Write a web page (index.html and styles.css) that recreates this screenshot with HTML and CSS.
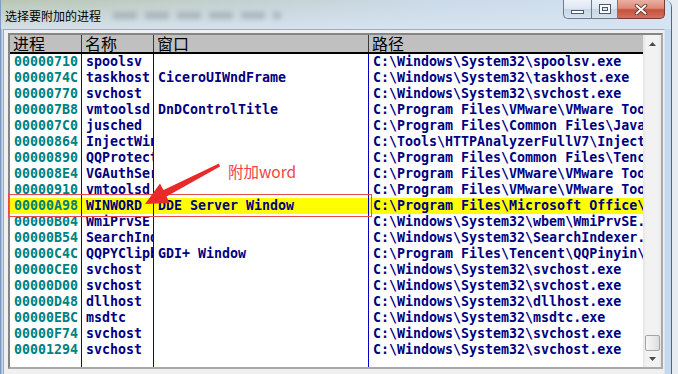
FILE: index.html
```html
<!DOCTYPE html>
<html>
<head>
<meta charset="utf-8">
<link rel="stylesheet" href="styles.css">
</head>
<body>
<div class="window">
  <div class="titlebar">
    <div class="title">选择要附加的进程</div>
    <div class="ghost"></div>
    <div class="caption">
      <div class="cbtn min"><svg width="13" height="4" viewBox="0 0 13 4"><rect x="0.5" y="0.5" width="12" height="3" fill="#fff" stroke="#4a5a6e"/></svg></div>
      <div class="cbtn max"><svg width="12" height="10" viewBox="0 0 12 10"><rect x="0.5" y="0.5" width="11" height="9" fill="#fff" stroke="#4a5a6e"/><rect x="3.5" y="3.5" width="5" height="3" fill="#dfe6ee" stroke="#4a5a6e"/></svg></div>
      <div class="cbtn close"><svg width="14" height="11" viewBox="0 0 14 11"><path d="M2.5 1.5 L11.5 9.5 M11.5 1.5 L2.5 9.5" stroke="#4b2a26" stroke-width="3.6" stroke-linecap="round"/><path d="M2.5 1.5 L11.5 9.5 M11.5 1.5 L2.5 9.5" stroke="#fff" stroke-width="2" stroke-linecap="round"/></svg></div>
    </div>
  </div>
  <div class="frame">
    <div class="client">
      <div class="listbox">
        <div class="table">
          <div class="hdr"><div>进程</div><div>名称</div><div>窗口</div><div>路径</div></div>
          <div class="row"><span class="pid">00000710</span><span>spoolsv</span><span></span><span>C:\Windows\System32\spoolsv.exe</span></div>
          <div class="row"><span class="pid">0000074C</span><span>taskhost</span><span>CiceroUIWndFrame</span><span>C:\Windows\System32\taskhost.exe</span></div>
          <div class="row"><span class="pid">00000770</span><span>svchost</span><span></span><span>C:\Windows\System32\svchost.exe</span></div>
          <div class="row"><span class="pid">000007B8</span><span>vmtoolsd</span><span>DnDControlTitle</span><span>C:\Program Files\VMware\VMware Tools\vmtoolsd.exe</span></div>
          <div class="row"><span class="pid">000007C0</span><span>jusched</span><span></span><span>C:\Program Files\Common Files\Java\Java Update\jusched.exe</span></div>
          <div class="row"><span class="pid">00000864</span><span>InjectWinSockServiceProcess</span><span></span><span>C:\Tools\HTTPAnalyzerFullV7\InjectWinSockServiceProcess.exe</span></div>
          <div class="row"><span class="pid">00000890</span><span>QQProtect</span><span></span><span>C:\Program Files\Common Files\Tencent\QQProtect\Bin\QQProtect.exe</span></div>
          <div class="row"><span class="pid">000008E4</span><span>VGAuthService</span><span></span><span>C:\Program Files\VMware\VMware Tools\VMware VGAuth\VGAuthService.exe</span></div>
          <div class="row"><span class="pid">00000910</span><span>vmtoolsd</span><span></span><span>C:\Program Files\VMware\VMware Tools\vmtoolsd.exe</span></div>
          <div class="row sel"><span class="pid">00000A98</span><span>WINWORD</span><span>DDE Server Window</span><span>C:\Program Files\Microsoft Office\Office14\WINWORD.EXE</span></div>
          <div class="row"><span class="pid">00000B04</span><span>WmiPrvSE</span><span></span><span>C:\Windows\System32\wbem\WmiPrvSE.exe</span></div>
          <div class="row"><span class="pid">00000B54</span><span>SearchIndexer</span><span></span><span>C:\Windows\System32\SearchIndexer.exe</span></div>
          <div class="row"><span class="pid">00000C4C</span><span>QQPYClipboard</span><span>GDI+ Window</span><span>C:\Program Files\Tencent\QQPinyin\QQPYClipboard.exe</span></div>
          <div class="row"><span class="pid">00000CE0</span><span>svchost</span><span></span><span>C:\Windows\System32\svchost.exe</span></div>
          <div class="row"><span class="pid">00000D00</span><span>svchost</span><span></span><span>C:\Windows\System32\svchost.exe</span></div>
          <div class="row"><span class="pid">00000D48</span><span>dllhost</span><span></span><span>C:\Windows\System32\dllhost.exe</span></div>
          <div class="row"><span class="pid">00000EBC</span><span>msdtc</span><span></span><span>C:\Windows\System32\msdtc.exe</span></div>
          <div class="row"><span class="pid">00000F74</span><span>svchost</span><span></span><span>C:\Windows\System32\svchost.exe</span></div>
          <div class="row"><span class="pid">00001294</span><span>svchost</span><span></span><span>C:\Windows\System32\svchost.exe</span></div>
          <div class="row fill"><span></span><span></span><span></span><span></span></div>
        </div>
        <div class="scrollbar">
          <div class="sb-btn"><svg width="7" height="4" viewBox="0 0 7 4"><path d="M0 4 L3.5 0 L7 4 Z" fill="#4a4a4a"/></svg></div>
          <div class="sb-track"><div class="sb-thumb"></div></div>
          <div class="sb-btn down"><svg width="7" height="4" viewBox="0 0 7 4"><path d="M0 0 L7 0 L3.5 4 Z" fill="#4a4a4a"/></svg></div>
        </div>
      </div>
    </div>
  </div>
</div>
<div class="mark"></div>
<div class="note">附加word</div>
<svg class="arrow" width="678" height="374" viewBox="0 0 678 374">
  <polygon points="219,163.5 163.5,190 160,183.5 145,204 169.5,203 166.5,196.5 220,166.5" fill="#e82a2a"/>
</svg>
</body>
</html>
```
FILE: styles.css
```css
* { box-sizing: border-box; }
html, body { margin: 0; padding: 0; }
body {
  width: 678px;
  height: 374px;
  overflow: hidden;
  position: relative;
  background: #e6ecf2;
  font-family: "DejaVu Sans Mono", monospace;
}
.window {
  width: 672px;
  height: 374px;
  display: flex;
  flex-direction: column;
  border-right: 1px solid #55677b;
  border-top-right-radius: 7px;
  overflow: hidden;
  background: #c7d9ed;
}
.titlebar {
  height: 29px;
  flex: none;
  display: flex;
  align-items: flex-start;
  background:
    linear-gradient(180deg, rgba(255,255,255,0) 0, rgba(216,229,243,0.85) 100%),
    linear-gradient(90deg, #b9c6b3 0, #c3d0cf 35%, #cbdae8 65%, #d2e1f0 100%);
  box-shadow: inset 1px 0 #7f9cc2;
}
.title {
  font: 12px/12px "Noto Sans CJK SC", sans-serif;
  color: #000;
  margin: 10px 0 0 5px;
  white-space: nowrap;
}
.ghost {
  width: 168px;
  height: 7px;
  margin: 12px 0 0 12px;
  background: repeating-linear-gradient(90deg, #7f8d99 0 24px, transparent 24px 32px);
  filter: blur(2.5px);
  opacity: 0.45;
}
.caption {
  margin-left: auto;
  margin-right: 6px;
  display: flex;
  height: 19px;
}
.cbtn {
  height: 19px;
  display: flex;
  justify-content: center;
  border: 1px solid #6b7b90;
  border-top: none;
}
.min {
  width: 28px;
  align-items: flex-end;
  padding-bottom: 4px;
  border-right: none;
  border-bottom-left-radius: 5px;
  background: linear-gradient(180deg, #eef3f8 0, #dde6f0 50%, #c9d6e4 51%, #d6e1ed 100%);
}
.max {
  width: 27px;
  align-items: center;
  background: linear-gradient(180deg, #eef3f8 0, #dde6f0 50%, #c9d6e4 51%, #d6e1ed 100%);
}
.close {
  width: 47px;
  align-items: center;
  border-left: none;
  border-bottom-right-radius: 5px;
  border-color: #7a3a32;
  background: linear-gradient(180deg, #eab1a4 0, #dc8a78 45%, #c8503c 55%, #d2735c 100%);
}
.frame {
  flex: 1;
  display: flex;
  padding: 0 6px 0 3px;
  background: #c6d8ec;
  box-shadow: inset 1px 0 #7896bf, inset 2px 0 #a9c1dd;
}
.client {
  flex: 1;
  background: #f0f0f0;
  border-top: 1px solid #a2abb5;
  border-left: 1px solid #a2abb5;
  border-right: 1px solid #dde5ee;
  padding: 3px 1px 0 4px;
}
.listbox {
  height: 336px;
  display: flex;
  background: #fff;
  border: 2px solid;
  border-color: #858585 #a9a9a9 #a9a9a9 #858585;
}
.table {
  width: 633px;
  display: flex;
  flex-direction: column;
}
.hdr {
  display: grid;
  grid-template-columns: 72px 72px 215px 274px;
  height: 19px;
  flex: none;
  background: #c0c0c0;
  border-bottom: 2px solid #000;
}
.hdr > div {
  font: 16px/17px "Noto Sans CJK SC", sans-serif;
  color: #000;
  padding-left: 3px;
  border-right: 1px solid #3a3a3a;
  white-space: nowrap;
}
.hdr > div:last-child { border-right: none; }
.row {
  display: grid;
  grid-template-columns: 72px 72px 215px 274px;
  height: 16px;
  flex: none;
  font: bold 13.3px/16px "DejaVu Sans Mono", monospace;
  color: #000080;
}
.row > span {
  padding-left: 4px;
  border-right: 1px solid #0000c4;
  white-space: nowrap;
  overflow: hidden;
}
.row > span:last-child { border-right: none; }
.row .pid { color: #008080; }
.row.sel { background: #ffff00; }
.row.fill { flex: 1; height: auto; }
.scrollbar {
  width: 18px;
  display: flex;
  flex-direction: column;
  background: linear-gradient(90deg, #e4e4e4 0, #f2f2f2 3px, #f2f2f2 15px, #e8e8e8 100%);
}
.sb-btn {
  height: 17px;
  flex: none;
  display: flex;
  align-items: center;
  justify-content: center;
}
.sb-btn.down { height: 16px; }
.sb-track {
  flex: 1;
  display: flex;
  flex-direction: column;
  justify-content: flex-end;
  padding: 0 1px 0 2px;
}
.sb-thumb {
  height: 16px;
  border: 1px solid #a4a4a4;
  border-radius: 2px;
  background: linear-gradient(90deg, #f6f6f6 0, #e9e9e9 60%, #dcdcdc 100%);
}
.mark {
  position: absolute;
  left: 8px;
  top: 194px;
  width: 364px;
  height: 23px;
  border: 1px solid #e84a4a;
}
.note {
  position: absolute;
  left: 228px;
  top: 162px;
  font: 15.5px/18px "Noto Sans CJK SC", sans-serif;
  color: #f04444;
  white-space: nowrap;
}
.arrow {
  position: absolute;
  left: 0;
  top: 0;
  pointer-events: none;
}
```
